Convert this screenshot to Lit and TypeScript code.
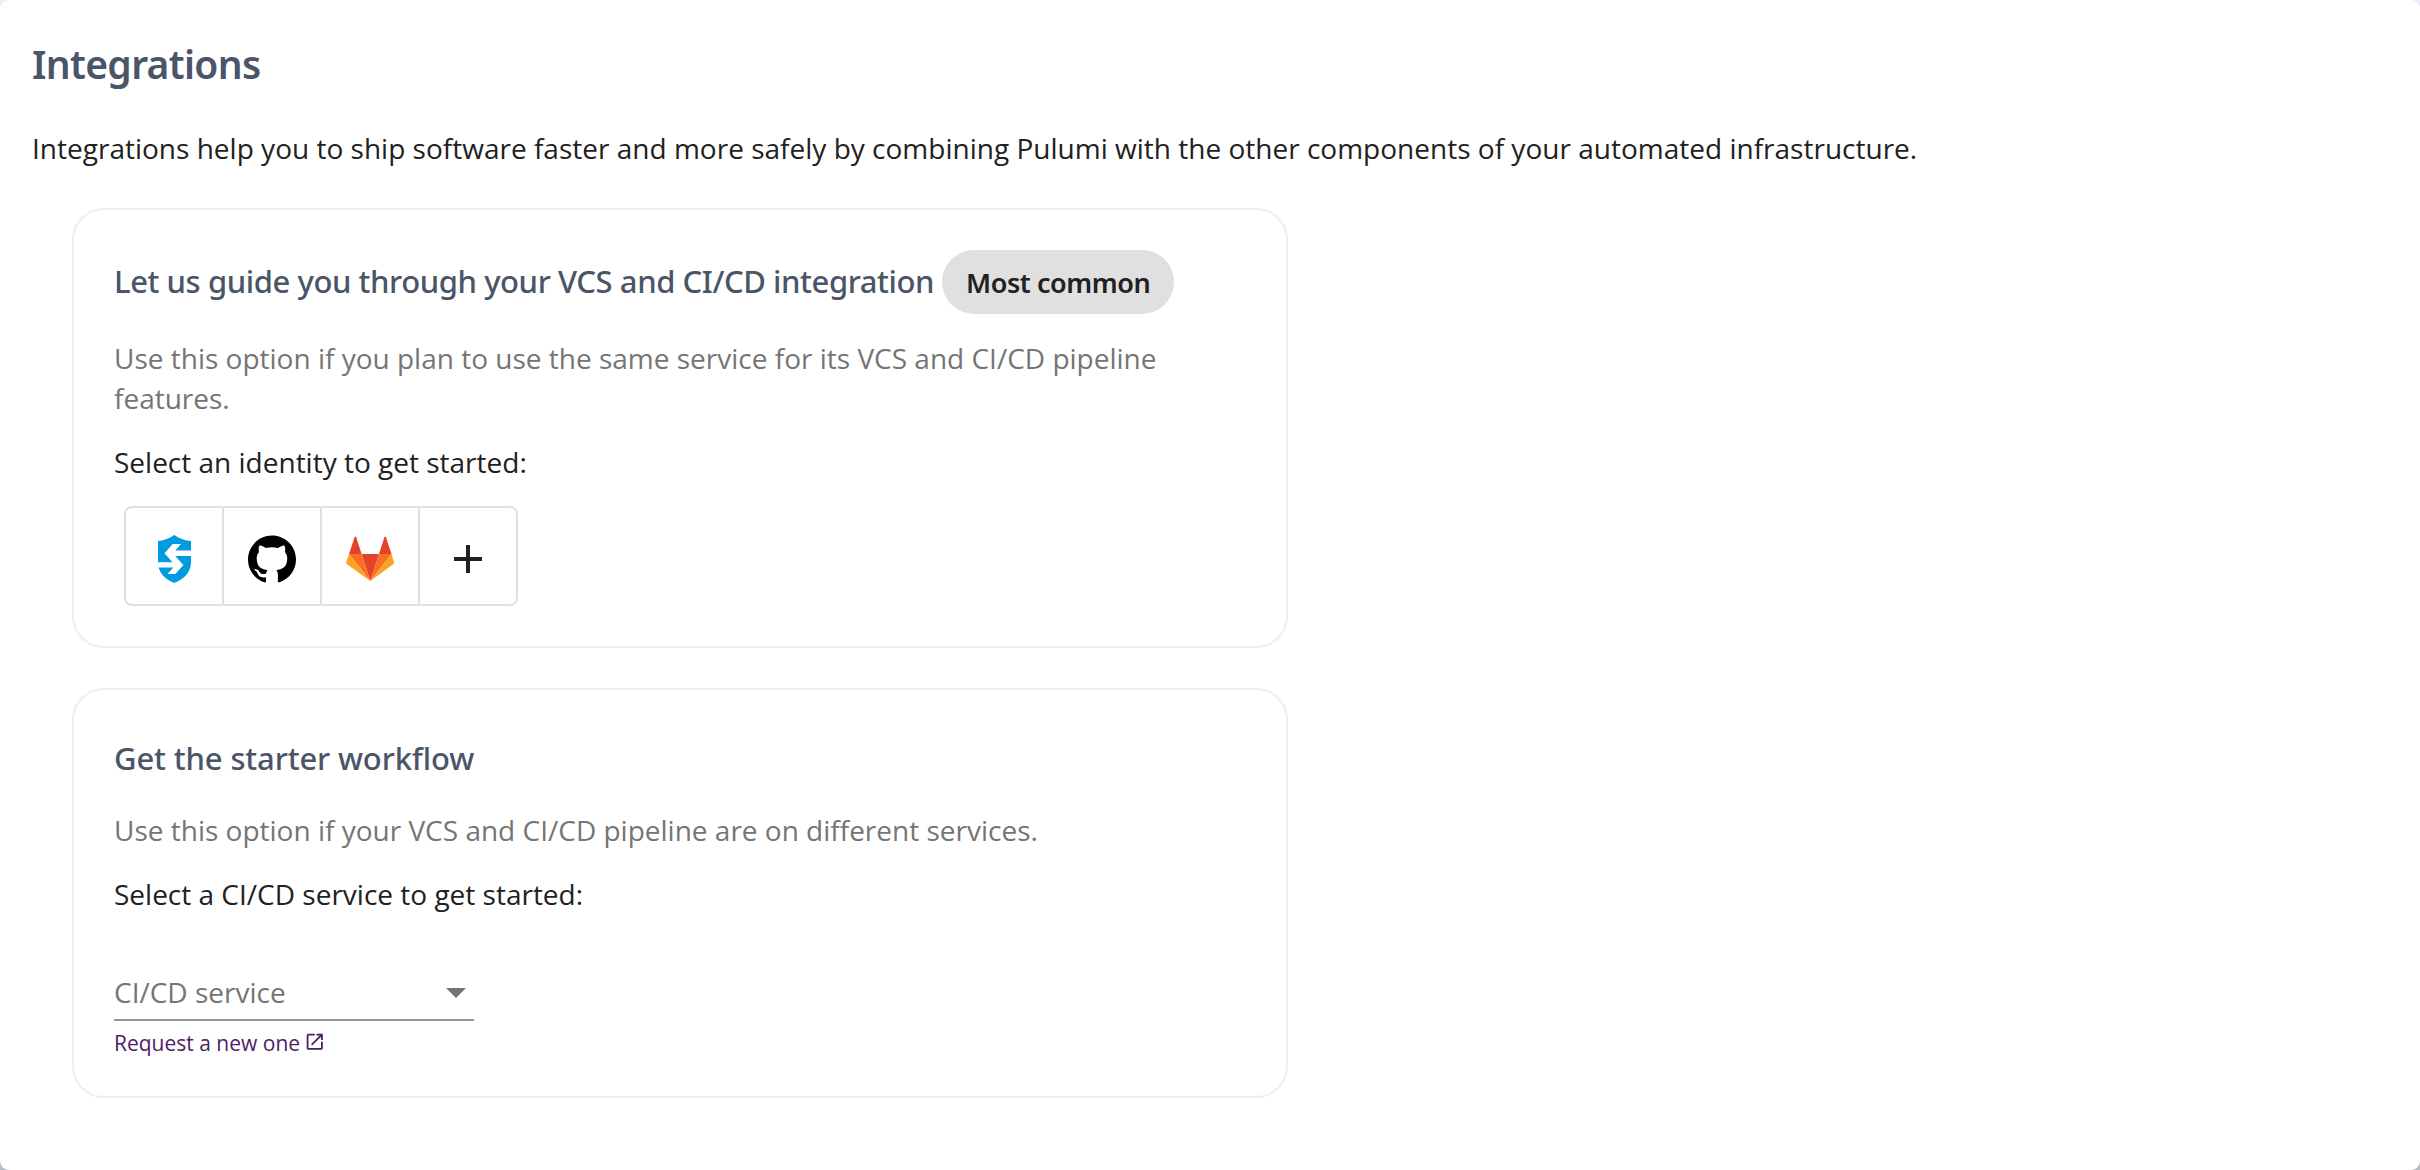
import { LitElement, html, css, svg } from "lit";
import { customElement } from "lit/decorators.js";

const shieldIcon = svg`
  <path fill="#009cde" d="M24.3 0C29.5 4 35.500 5.600 41 6.100V27C41 37 35 43.500 24.300 48C13.700 43.500 8 37 8 27V6.100C13.300 5.600 19 4 24.300 0Z"/>
  <path fill="#fff" d="M14.500 18.200L22.700 9H31L25.300 15.600H42V20.900H25.200L33.400 30L25.300 39H17.500L23.300 32.500H7V27.300H22.500Z"/>`;

const githubIcon = svg`
  <path transform="scale(2)" fill="#000" d="M12 .297c-6.630 0-12 5.373-12 12 0 5.303 3.438 9.800 8.205 11.385.6.113.82-.258.82-.577 0-.285-.010-1.040-.015-2.040-3.338.724-4.042-1.610-4.042-1.610C4.422 18.070 3.633 17.700 3.633 17.700c-1.087-.744.084-.729.084-.729 1.205.084 1.838 1.236 1.838 1.236 1.070 1.835 2.809 1.305 3.495.998.108-.776.417-1.305.760-1.605-2.665-.3-5.466-1.332-5.466-5.930 0-1.310.465-2.380 1.235-3.220-.135-.303-.540-1.523.105-3.176 0 0 1.005-.322 3.300 1.230.960-.267 1.980-.399 3-.405 1.020.006 2.040.138 3 .405 2.280-1.552 3.285-1.230 3.285-1.230.645 1.653.240 2.873.120 3.176.765.840 1.230 1.910 1.230 3.220 0 4.610-2.805 5.625-5.475 5.920.420.360.810 1.096.810 2.220 0 1.606-.015 2.896-.015 3.286 0 .315.210.690.825.570C20.565 22.092 24 17.592 24 12.297c0-6.627-5.373-12-12-12"/>`;

const gitlabIcon = svg`
  <path fill="#e24329" d="M24.300 46L33 19H15.600Z"/>
  <path fill="#fc6d26" d="M24.300 46L15.600 19H3Z"/>
  <path fill="#fca326" d="M3 19L.2 27.200Q-.2 28.500 1 29.300L24.300 46Z"/>
  <path fill="#e24329" d="M3 19H15.600L10.200 2.300Q9.400 .8 8.600 2.300Z"/>
  <path fill="#fc6d26" d="M24.300 46L33 19H45.500Z"/>
  <path fill="#fca326" d="M45.500 19L48 27.200Q48.300 28.500 47.200 29.300L24.300 46Z"/>
  <path fill="#e24329" d="M45.500 19H33L38.400 2.300Q39.200 .8 40 2.300Z"/>`;

const plusIcon = svg`<path fill="#212121" d="M22 10H26V22H38V26H26V38H22V26H10V22H22Z"/>`;

const identities = [
  { name: "Identity", icon: shieldIcon },
  { name: "GitHub", icon: githubIcon },
  { name: "GitLab", icon: gitlabIcon },
  { name: "Add", icon: plusIcon },
];

@customElement("app-root")
export class AppRoot extends LitElement {
  static styles = css`
    :host {
      display: block;
      height: 1170px;
      overflow: hidden;
      background: linear-gradient(#e9eff5 50%, #b5bdc5 50%);
      font-family: "Open Sans", sans-serif;
      font-size: 28px;
      line-height: 40px;
      color: #212121;
    }
    * { box-sizing: border-box; margin: 0; }
    svg { display: block; flex: none; }
    .page { height: 1170px; background: #fff; border-radius: 9px; padding: 40px 32px; }
    .title, .heading, .chip { font-family: "Noto Sans", sans-serif; white-space: nowrap; }
    .title { font-size: 39px; font-weight: 600; line-height: 48px; color: #4a5568; letter-spacing: -0.65px; }
    .intro { margin-top: 40px; letter-spacing: 0.008px; }
    .cards { display: flex; flex-direction: column; gap: 40px; width: 1216px; margin: 40px 0 0 40px; }
    .card { border: 2px solid #eee; border-radius: 32px; padding: 40px; }
    .head { display: flex; align-items: center; gap: 8px; height: 64px; }
    .head.plain { height: 56px; }
    .heading { font-size: 31px; font-weight: 500; color: #4a5568; letter-spacing: -0.13px; }
    .heading.tight { letter-spacing: -0.42px; margin-bottom: 2px; }
    .chip {
      width: 232px;
      height: 64px;
      line-height: 66px;
      border-radius: 32px;
      background: #e0e0e0;
      padding: 0 24px;
      font-size: 27px;
      font-weight: 600;
      letter-spacing: -0.42px;
    }
    .desc { margin-top: 24px; color: #757575; }
    .label { margin-top: 24px; }
    .group {
      display: flex;
      width: 394px;
      margin: 24px 0 0 10px;
      border: 2px solid #e0e0e0;
      border-radius: 8px;
    }
    .cell {
      display: flex;
      align-items: center;
      justify-content: center;
      box-sizing: content-box;
      width: 96px;
      height: 90px;
      padding-top: 6px;
    }
    .cell + .cell { border-left: 2px solid #e0e0e0; }
    .select {
      display: flex;
      align-items: center;
      justify-content: space-between;
      width: 360px;
      height: 49px;
      margin-top: 58px;
      padding: 0 8px 7px 0;
      border-bottom: 2px solid #949494;
      color: #757575;
    }
    .arrow { margin-top: 2px; }
    .request {
      display: flex;
      align-items: center;
      gap: 4px;
      margin: 7px 0 -2px;
      color: #4d1d66;
      font-size: 21px;
      line-height: 30px;
    }
    .open { margin-bottom: 2px; }
  `;

  render() {
    return html`<main class="page">
      <h1 class="title">Integrations</h1>
      <p class="intro">Integrations help you to ship software faster and more safely by combining Pulumi with the other components of your automated infrastructure.</p>
      <div class="cards">
        <section class="card">
          <div class="head">
            <h2 class="heading tight">Let us guide you through your VCS and CI/CD integration</h2>
            <span class="chip">Most common</span>
          </div>
          <p class="desc">Use this option if you plan to use the same service for its VCS and CI/CD pipeline features.</p>
          <p class="label">Select an identity to get started:</p>
          <div class="group">
            ${identities.map((i) => html`<div class="cell" role="button">
              <svg width="48" height="48" viewBox="0 0 48 48">${i.icon}</svg>
            </div>`)}
          </div>
        </section>
        <section class="card">
          <div class="head plain"><h2 class="heading">Get the starter workflow</h2></div>
          <p class="desc">Use this option if your VCS and CI/CD pipeline are on different services.</p>
          <p class="label">Select a CI/CD service to get started:</p>
          <div class="select">
            <span>CI/CD service</span>
            <svg class="arrow" width="20" height="10" viewBox="0 0 20 10"><path fill="#757575" d="M0 0H20L10 10Z"/></svg>
          </div>
          <a class="request">
            <span>Request a new one</span>
            <svg class="open" width="21.500" height="21.500" viewBox="0 0 24 24">
              <path fill="currentColor" d="M19 19H5V5h7V3H5c-1.110 0-2 .9-2 2v14c0 1.100.890 2 2 2h14c1.100 0 2-.9 2-2v-7h-2v7zM14 3v2h3.590l-9.830 9.830 1.410 1.410L19 6.410V10h2V3h-7z"/>
            </svg>
          </a>
        </section>
      </div>
    </main>`;
  }
}
